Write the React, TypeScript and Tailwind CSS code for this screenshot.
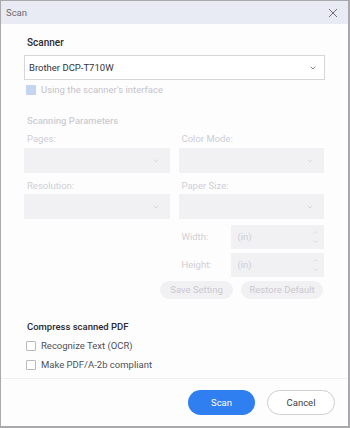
import React from "react";

const font = { fontFamily: 'Roboto, "Noto Sans", sans-serif' };

function Chevron({ className = "" }: { className?: string }) {
  return (
    <svg width="6" height="4" viewBox="0 0 6 4" className={className}>
      <path d="M0.7 0.7 L3 3 L5.3 0.7" fill="none" stroke="currentColor" strokeWidth="0.9" />
    </svg>
  );
}

function DisabledSelect() {
  return (
    <div className="h-[25px] bg-[#f1f0f3] flex items-center justify-end pr-[11px] text-[#d4d3d8]">
      <Chevron />
    </div>
  );
}

function Spin() {
  return (
    <div className="h-[24px] bg-[#f1f0f3] flex items-center justify-between pl-[7px] pr-[6px] text-[9.5px] leading-[14px] text-[#cfced3]">
      <span>(in)</span>
      <div className="flex flex-col gap-[6px]">
        <svg width="5" height="3" viewBox="0 0 5 3"><path d="M0.5 2.5 L2.5 0.5 L4.5 2.5" fill="none" stroke="#d4d3d8" strokeWidth="0.8" /></svg>
        <svg width="5" height="3" viewBox="0 0 5 3"><path d="M0.5 0.5 L2.5 2.5 L4.5 0.5" fill="none" stroke="#d4d3d8" strokeWidth="0.8" /></svg>
      </div>
    </div>
  );
}

function Label({ children, className = "" }: { children: React.ReactNode; className?: string }) {
  return <span className={"pl-[3px] text-[9.5px] leading-[14px] text-[#cfced3] " + className}>{children}</span>;
}

export default function App() {
  return (
    <div className="w-[350px] h-[428px] bg-[#a9a9ad] p-[1px] pr-[2px] pb-[2px]" style={font}>
      <div className="w-full h-full bg-[#fdfdfe] flex flex-col">
        <div className="h-[23px] shrink-0 bg-[#e8eaf4] flex items-center justify-between pl-[5px] pr-[10px]">
          <span className="text-[9.5px] leading-[14px] text-[#6b6b70]">Scan</span>
          <svg width="10" height="10" viewBox="0 0 10 10">
            <path d="M1 1 L9 9 M9 1 L1 9" stroke="#6f6f74" strokeWidth="1" />
          </svg>
        </div>
        <div className="flex-1 flex flex-col px-[23px]">
          <div className="pt-[12px] pl-[3px] text-[10px] leading-[14px] font-medium text-[#2a2a2e]">Scanner</div>
          <div className="mt-[5px] h-[25px] border border-[#d6d6da] bg-white flex items-center justify-between pl-[4px] pr-[8px] text-[9.5px] leading-[14px] text-[#333338]">
            <span>Brother DCP-T710W</span>
            <Chevron className="text-[#7a7a80]" />
          </div>
          <div className="mt-[4px] h-[12px] flex items-center gap-[5px] pl-[2px]">
            <div className="w-[10px] h-[10px] bg-[#c6d5ef] rounded-[1px]" />
            <span className="text-[9.5px] leading-[14px] text-[#c4c4c9]">Using the scanner's interface</span>
          </div>

          <div className="mt-[18px] pl-[3px] text-[9.5px] leading-[14px] font-medium text-[#cdcdd2]">Scanning Parameters</div>
          <div className="mt-[4px] grid grid-cols-2 gap-x-[9px] pr-[1px]">
            <div className="flex flex-col">
              <Label>Pages:</Label>
              <div className="mt-[2px]"><DisabledSelect /></div>
              <Label className="mt-[6px]">Resolution:</Label>
              <div className="mt-[1px]"><DisabledSelect /></div>
            </div>
            <div className="flex flex-col">
              <Label>Color Mode:</Label>
              <div className="mt-[2px]"><DisabledSelect /></div>
              <Label className="mt-[6px]">Paper Size:</Label>
              <div className="mt-[1px]"><DisabledSelect /></div>
              <div className="mt-[6px] flex items-center">
                <Label className="w-[52px]">Width:</Label>
                <div className="flex-1"><Spin /></div>
              </div>
              <div className="mt-[4px] flex items-center">
                <Label className="w-[52px]">Height:</Label>
                <div className="flex-1"><Spin /></div>
              </div>
            </div>
          </div>
          <div className="mt-[4px] flex justify-end gap-[8px] pr-[2px]">
            <div className="w-[73px] h-[18px] rounded-full bg-[#f1f0f3] flex items-center justify-center text-[9.5px] leading-[14px] text-[#cbcad0]">Save Setting</div>
            <div className="w-[82px] h-[18px] rounded-full bg-[#f1f0f3] flex items-center justify-center text-[9.5px] leading-[14px] text-[#cbcad0]">Restore Default</div>
          </div>

          <div className="mt-[21px] pl-[3px] text-[9.5px] leading-[14px] font-medium text-[#2a2a2e]">Compress scanned PDF</div>
          <div className="mt-[6px] h-[12px] flex items-center gap-[5px] pl-[2px]">
            <div className="w-[10px] h-[10px] border border-[#b9b9be] bg-white rounded-[1px]" />
            <span className="text-[9.5px] leading-[14px] text-[#505056]">Recognize Text (OCR)</span>
          </div>
          <div className="mt-[7px] h-[12px] flex items-center gap-[5px] pl-[2px]">
            <div className="w-[10px] h-[10px] border border-[#b9b9be] bg-white rounded-[1px]" />
            <span className="text-[9.5px] leading-[14px] text-[#505056]">Make PDF/A-2b compliant</span>
          </div>
        </div>
        <div className="h-[48px] shrink-0 border-t border-[#efeff2] flex items-center justify-end gap-[12px] pr-[13px]">
          <div className="w-[67px] h-[25px] rounded-full bg-[#2f7ff0] flex items-center justify-center text-[9.5px] leading-[14px] text-white">Scan</div>
          <div className="w-[68px] h-[25px] rounded-full border border-[#cfcfd4] bg-white flex items-center justify-center text-[9.5px] leading-[14px] text-[#404046]">Cancel</div>
        </div>
      </div>
    </div>
  );
}
